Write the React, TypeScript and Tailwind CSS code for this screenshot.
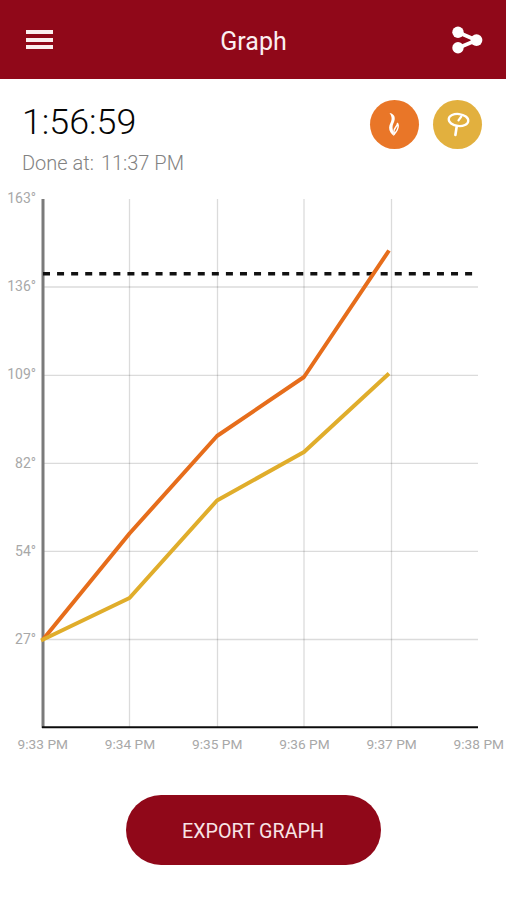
const Y_LABELS = ["163°", "136°", "109°", "82°", "54°", "27°"];
const X_LABELS = ["9:33 PM", "9:34 PM", "9:35 PM", "9:36 PM", "9:37 PM", "9:38 PM"];

const GRID_X = [129.5, 217.5, 304, 391.5];
const GRID_Y = [97, 185.3, 273.3, 361.4, 449.5];

function Header() {
  return (
    <header className="flex h-[79px] items-center justify-between bg-[#900819] pr-[23px] pl-[26px] text-[#fbeff0]">
      <button className="flex h-[19px] w-[27px] flex-col justify-between" aria-label="Menu">
        <span className="h-1 w-full bg-[#fbeff0]" />
        <span className="h-1 w-full bg-[#fbeff0]" />
        <span className="h-1 w-full bg-[#fbeff0]" />
      </button>
      <h1 className="pt-[3px] pl-[3px] text-[25px] leading-none">Graph</h1>
      <button aria-label="Share">
        <svg width="32" height="30" viewBox="0 0 32 30" fill="white" stroke="white">
          <path d="M7 7.2 25.5 15.3 7 23" fill="none" strokeWidth="3.8" />
          <circle cx="7" cy="7.2" r="5.7" stroke="none" />
          <circle cx="7" cy="22.8" r="5.7" stroke="none" />
          <circle cx="25.5" cy="15.1" r="5.9" stroke="none" />
        </svg>
      </button>
    </header>
  );
}

function Summary() {
  return (
    <section className="flex h-[111px] justify-between pr-6 pl-[22px]">
      <div className="pt-[22px]">
        <div className="text-[35.8px] leading-[42px] font-light text-[#050505]">1:56:59</div>
        <div className="mt-2 flex gap-[7px] text-[20px] leading-6 font-light text-[#828282]">
          <span>Done at:</span>
          <span>11:37 PM</span>
        </div>
      </div>

      <div className="flex gap-3.5 pt-[21px]">
        {/* Smoker temperature */}
        <button className="size-[49px] rounded-full bg-[#e97628]" aria-label="Smoker">
          <svg width="49" height="49" viewBox="0 0 49 49" fill="white">
            <path d="M19.5 13c3.8.6 5.700 3 5.200 6.500-.5 3.200-2.300 5-2.200 8 .1 2.700 1.200 4.700 1.500 8.500-3-2-5-5-4.900-8.500.1-3 2.400-5.500 2.500-8.500.1-2.300-.8-4.200-2.100-6Z" />
            <path
              d="M27.500 23.500c-.2 3-4 4.500-3.700 8.500l.4 2.500c2-3.500 6-6.500 3.300-11Z"
              fill="none"
              stroke="white"
              strokeWidth="1.5"
              strokeLinejoin="round"
            />
          </svg>
        </button>
        {/* Meat probe */}
        <button className="size-[49px] rounded-full bg-[#e2b03e]" aria-label="Probe">
          <svg width="49" height="49" viewBox="0 0 49 49" fill="none" stroke="white" strokeLinecap="round">
            <ellipse cx="25.5" cy="20" rx="9.8" ry="6" strokeWidth="2.3" transform="rotate(6 25.5 20)" />
            <path d="M23.7 26.5 22.4 35" strokeWidth="2.6" />
            <path d="M25.5 20.3 28.3 16.5" strokeWidth="2.2" />
          </svg>
        </button>
      </div>
    </section>
  );
}

function Chart() {
  return (
    <svg width="506" height="570" viewBox="0 0 506 570" fill="none">
      <g stroke="#000000" strokeOpacity="0.14" strokeWidth="1.3">
        {GRID_Y.map((y) => (
          <path key={y} d={`M43 ${y}H478`} />
        ))}
        {GRID_X.map((x) => (
          <path key={x} d={`M${x} 9V537`} />
        ))}
      </g>

      <path d="M43 9V538" stroke="#7b7b7b" strokeWidth="3" />
      <path d="M42 537.3H478" stroke="#0c0c0c" strokeWidth="2" />

      {/* Target temperature */}
      <path d="M43 83.7H475" stroke="#111111" strokeWidth="3.4" strokeDasharray="7 7.07" />

      <g strokeWidth="4" strokeLinejoin="round">
        <path d="M43 449.5 129.5 343.5 217 246 304 187 389 60.5" stroke="#e66d1b" />
        <path d="M41 450.5 129.5 408 217 310.5 304 262 389 183.5" stroke="#e0ad2b" />
      </g>

      <g fill="#a8a8a8" fontSize="13.7">
        {Y_LABELS.map((label, i) => (
          <text key={label} x="36" y={13.2 + i * 88.1} textAnchor="end" fontSize="14">
            {label}
          </text>
        ))}
        {X_LABELS.map((label, i) => (
          <text key={label} x={42.8 + i * 87.2} y="558.7" textAnchor="middle">
            {label}
          </text>
        ))}
      </g>
    </svg>
  );
}

export default function App() {
  return (
    <main className="flex h-[900px] w-[506px] flex-col overflow-hidden bg-white font-['Roboto',sans-serif]">
      <Header />
      <Summary />
      <Chart />
      <button className="mt-[35px] h-[70px] w-[255px] self-center rounded-full bg-[#900819] pt-[3px] text-[19.7px] text-[#f8e4e6]">
        EXPORT GRAPH
      </button>
    </main>
  );
}
